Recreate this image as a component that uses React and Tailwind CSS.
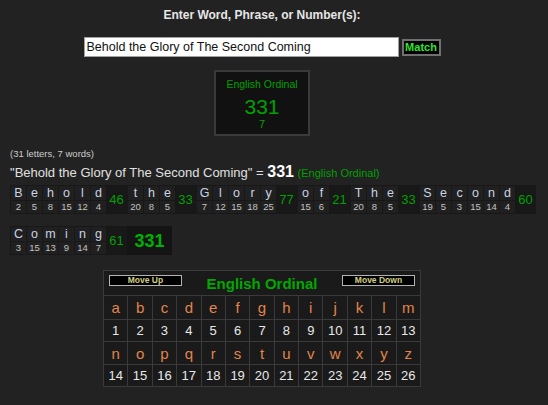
import React from 'react';

const phrase = 'Behold the Glory of The Second Coming';
const words = phrase.split(' ');
const val = (c) => c.toLowerCase().charCodeAt(0) - 96;
const wordSum = (w) => w.split('').reduce((s, c) => s + val(c), 0);
const total = words.reduce((s, w) => s + wordSum(w), 0);

const abc = 'abcdefghijklmnopqrstuvwxyz'.split('');

const MoveButton = ({ label }) => (
  <button className="mb-[5px] flex h-[11px] w-[73px] items-center justify-center border border-[#b4b4b4] bg-black text-[8.5px] font-bold leading-none text-[#d2ce80]">
    {label}
  </button>
);

const WordBlock = ({ word }) => (
  <div className="flex gap-px bg-[#181818] p-px">
    {word.split('').map((c, i) => (
      <div key={i} className="flex w-[15px] flex-col gap-px">
        <div className="flex h-[14px] items-center justify-center bg-[#202020] text-[12.5px] leading-none text-[#c8d4e6]">
          {c}
        </div>
        <div className="flex h-[12px] items-center justify-center bg-[#202020] text-[9.5px] leading-none text-[#c4c4c4]">
          {val(c)}
        </div>
      </div>
    ))}
    <div className="flex w-[19px] items-center justify-center text-[13px] leading-none text-[#00a000]">
      {wordSum(word)}
    </div>
  </div>
);

export default function App() {
  return (
    <div className="min-h-[405px] bg-[#222222] font-['Liberation_Sans',Arial,sans-serif] text-[#dddddd]">
      <div className="flex w-[524px] flex-col items-center pt-[8px]">
        <div className="text-[12px] font-bold leading-[14px] text-[#e6e6e6]">Enter Word, Phrase, or Number(s):</div>
        <div className="mt-[15px] flex items-center gap-[3px]">
          <input
            readOnly
            value={phrase}
            className="h-[20px] w-[315px] border border-[#a0a0a0] bg-white px-[2px] text-[12.5px] text-[#111] outline-none"
          />
          <button className="flex h-[17px] w-[39px] items-center justify-center border-2 border-[#707070] bg-black text-[11px] font-bold leading-none text-[#2ee62e]">
            Match
          </button>
        </div>
        <div className="mt-[13px] flex h-[66px] w-[96px] flex-col items-center border-2 border-[#3a3a3a] bg-[#111111] pt-[6px] text-[#00a000]">
          <div className="text-[10.5px] leading-[13px]">English Ordinal</div>
          <div className="mt-[5px] text-[21px] leading-[22px]">{total}</div>
          <div className="text-[11px] leading-[12px]">{words.length}</div>
        </div>
      </div>

      <div className="px-[10px]">
        <div className="mt-[12px] text-[9.5px] leading-[11px] text-[#cccccc]">
          ({phrase.replace(/ /g, '').length} letters, {words.length} words)
        </div>
        <div className="mt-[5px] text-[13px] leading-[18px] text-[#e0e0e0]">
          "{phrase}" = <span className="text-[16px] font-bold leading-none text-white">{total}</span>{' '}
          <span className="text-[11px] leading-none text-[#00a000]">(English Ordinal)</span>
        </div>
        <div className="mt-[3px] flex flex-wrap gap-y-[12px]">
          {words.map((w, i) => (
            <WordBlock key={i} word={w} />
          ))}
          <div className="flex h-[29px] w-[45px] items-center justify-center bg-[#141414] text-[18px] font-bold leading-none text-[#00b000]">
            {total}
          </div>
        </div>
      </div>

      <div className="mt-[15px] flex w-[524px] justify-center">
        <div className="flex w-[318px] flex-col gap-px bg-[#3a3a3a] p-px">
          <div className="flex h-[24px] items-center justify-between bg-[#1a1a1a] px-[5px]">
            <MoveButton label="Move Up" />
            <div className="text-[15px] font-bold leading-none text-[#00a800]">English Ordinal</div>
            <MoveButton label="Move Down" />
          </div>
          {[0, 13].map((start) => (
            <React.Fragment key={start}>
              <div className="grid grid-cols-[repeat(13,minmax(0,1fr))] gap-px">
                {abc.slice(start, start + 13).map((c) => (
                  <div key={c} className={`flex ${start === 0 ? 'h-[23px]' : 'h-[22px]'} items-center justify-center bg-[#1a1a1a] text-[15px] leading-none text-[#e0854d]`}>
                    {c}
                  </div>
                ))}
              </div>
              <div className="grid grid-cols-[repeat(13,minmax(0,1fr))] gap-px">
                {abc.slice(start, start + 13).map((c) => (
                  <div key={c} className="flex h-[21px] items-center justify-center bg-[#1a1a1a] text-[13px] leading-none text-[#e8e8e8]">
                    {val(c)}
                  </div>
                ))}
              </div>
            </React.Fragment>
          ))}
        </div>
      </div>
    </div>
  );
}
